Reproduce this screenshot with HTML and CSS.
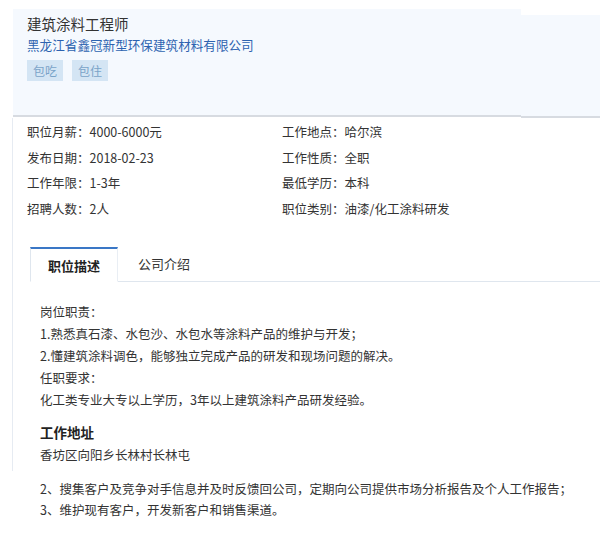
FILE: index.html
```html
<!DOCTYPE html>
<html lang="zh-CN">
<head>
<meta charset="utf-8">
<link rel="stylesheet" href="styles.css">
</head>
<body>
<div class="header-row">
  <div class="header-main">
    <div class="job-title">建筑涂料工程师</div>
    <div class="company">黑龙江省鑫冠新型环保建筑材料有限公司</div>
    <div class="tags"><span class="tag">包吃</span><span class="tag">包住</span></div>
  </div>
  <div class="header-side"></div>
</div>
<div class="content">
  <div class="info">
    <div class="cell">职位月薪：4000-6000元</div>
    <div class="cell">工作地点：哈尔滨</div>
    <div class="cell">发布日期：2018-02-23</div>
    <div class="cell">工作性质：全职</div>
    <div class="cell">工作年限：1-3年</div>
    <div class="cell">最低学历：本科</div>
    <div class="cell">招聘人数：2人</div>
    <div class="cell">职位类别：油漆/化工涂料研发</div>
  </div>
  <div class="tabs">
    <div class="tab active">职位描述</div>
    <div class="tab">公司介绍</div>
    <div class="tab-fill"></div>
  </div>
  <div class="desc">
    <p>岗位职责：</p>
    <p>1.熟悉真石漆、水包沙、水包水等涂料产品的维护与开发；</p>
    <p>2.懂建筑涂料调色，能够独立完成产品的研发和现场问题的解决。</p>
    <p>任职要求：</p>
    <p>化工类专业大专以上学历，3年以上建筑涂料产品研发经验。</p>
  </div>
  <div class="addr">
    <div class="addr-title">工作地址</div>
    <div class="addr-text">香坊区向阳乡长林村长林屯</div>
  </div>
</div>
<div class="extra">
  <p>2、搜集客户及竞争对手信息并及时反馈回公司，定期向公司提供市场分析报告及个人工作报告；</p>
  <p>3、维护现有客户，开发新客户和销售渠道。</p>
</div>
</body>
</html>
```
FILE: styles.css
```css
* { box-sizing: border-box; }
html, body { margin: 0; padding: 0; background: #fff; }
body {
  font-family: "Noto Sans CJK SC", "Noto Sans", sans-serif;
  font-size: 12.5px;
  color: #333;
  width: 600px;
  height: 542px;
  overflow: hidden;
}
p { margin: 0; }
.header-row {
  display: flex;
  margin-left: 13px;
}
.header-main {
  flex: 0 0 508px;
  margin-top: 9px;
  height: 108px;
  background: #f5f9fe;
  border-bottom: 2px solid #d7dbe1;
  padding: 5px 0 0 14px;
}
.header-side {
  flex: 1;
  margin-top: 15px;
  height: 103px;
  background: #f5f9fe;
  border-bottom: 2px solid #d7dbe1;
}
.job-title {
  font-size: 14.5px;
  line-height: 20px;
  color: #333;
}
.company {
  font-size: 12.6px;
  line-height: 20px;
  margin-top: 1px;
  color: #2d63b0;
}
.tags {
  display: flex;
  gap: 9px;
  margin-top: 5px;
}
.tag {
  display: block;
  width: 36px;
  height: 21px;
  line-height: 21px;
  text-align: center;
  font-size: 12px;
  background: #d4e5f4;
  color: #7aa3c8;
}
.content {
  margin-left: 12px;
  border-left: 1px solid #e6ebf2;
  height: 353px;
}
.info {
  display: grid;
  grid-template-columns: 255px 1fr;
  grid-auto-rows: 25.5px;
  padding: 1px 0 0 14px;
}
.cell {
  line-height: 25.5px;
  white-space: nowrap;
}
.tabs {
  display: flex;
  margin-top: 26px;
  margin-left: 17px;
  height: 35px;
}
.tab {
  font-size: 13px;
  line-height: 33px;
  border-bottom: 1px solid #dfe6ee;
  padding: 0 20px;
}
.tab.active {
  width: 88px;
  padding: 0;
  text-align: center;
  font-weight: bold;
  color: #222;
  background: #fff;
  border-top: 2px solid #3a77c6;
  border-left: 1px solid #dfe6ee;
  border-right: 1px solid #e9eef4;
  border-bottom: 1px solid #fff;
}
.tab-fill {
  flex: 1;
  border-bottom: 1px solid #dfe6ee;
}
.desc {
  padding: 19px 0 0 27px;
}
.desc p {
  line-height: 22px;
}
.addr {
  padding: 10px 0 0 27px;
}
.addr-title {
  font-size: 13.5px;
  font-weight: bold;
  line-height: 22px;
  color: #222;
}
.addr-text {
  line-height: 24px;
}
.extra {
  padding: 7px 0 0 40px;
}
.extra p {
  line-height: 21px;
  white-space: nowrap;
}
```
